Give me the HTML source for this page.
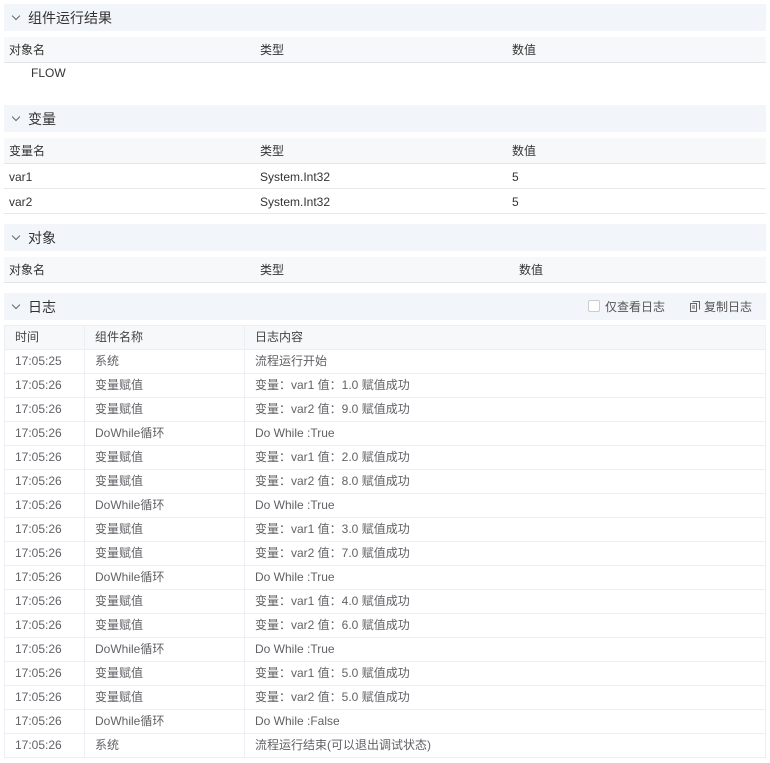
<!DOCTYPE html><html><head><style>
*{margin:0;padding:0;box-sizing:border-box}
body{width:770px;height:763px;background:#fff;font-family:"Liberation Sans","Noto Sans CJK SC",sans-serif;font-size:12px;color:#333;position:relative;overflow:hidden}
.h{position:absolute;left:4px;width:762px;height:27px;background:#f2f5fa;font-size:14px;line-height:29px;padding-left:24px;color:#333}
.h:before{content:"";position:absolute;left:9px;top:9px;width:5px;height:5px;border-right:1px solid #666;border-bottom:1px solid #666;transform:rotate(45deg)}
.th{position:absolute;left:4px;width:762px;height:26px;background:#f7f8fa;border-bottom:1px solid #e3e5ea;line-height:26px}
.r{position:absolute;left:4px;width:762px;height:25px;border-bottom:1px solid #e6e8ec;line-height:26px}
.c{position:absolute;top:0}
table{position:absolute;left:4px;top:325px;width:762px;border-collapse:collapse;color:#606266}
td{height:24px;border:1px solid #ebeef5;padding-left:10px;line-height:23px}
tr:first-child td{background:#f7f8fa;color:#444}
.t{position:absolute;font-size:12px;color:#555;top:293px;line-height:27px}
</style></head><body>
<div class="h" style="top:4px">组件运行结果</div>
<div class="th" style="top:37px"><span class="c" style="left:5px">对象名</span><span class="c" style="left:256px">类型</span><span class="c" style="left:508px">数值</span></div>
<div style="position:absolute;left:31px;top:64px;line-height:18px">FLOW</div>
<div class="h" style="top:105px">变量</div>
<div class="th" style="top:138px"><span class="c" style="left:5px">变量名</span><span class="c" style="left:256px">类型</span><span class="c" style="left:508px">数值</span></div>
<div class="r" style="top:164px"><span class="c" style="left:5px">var1</span><span class="c" style="left:256px">System.Int32</span><span class="c" style="left:508px">5</span></div>
<div class="r" style="top:189px"><span class="c" style="left:5px">var2</span><span class="c" style="left:256px">System.Int32</span><span class="c" style="left:508px">5</span></div>
<div class="h" style="top:224px">对象</div>
<div class="th" style="top:257px"><span class="c" style="left:5px">对象名</span><span class="c" style="left:256px">类型</span><span class="c" style="left:515px">数值</span></div>
<div class="h" style="top:293px">日志</div>
<div style="position:absolute;left:588px;top:300px;width:12px;height:12px;border:1px solid #ccc;border-radius:2px;background:#fff"></div>
<div class="t" style="left:605px;top:294px">仅查看日志</div>
<svg style="position:absolute;left:689px;top:300px" width="12" height="13" viewBox="0 0 12 13"><path d="M3.5 1.5h7v8M1.5 3.5h6v8h-6z M3 6h3M3 8h3" fill="none" stroke="#666" stroke-width="1"/></svg>
<div class="t" style="left:704px;top:294px">复制日志</div>
<table>
<colgroup><col style="width:80px"><col style="width:160px"><col></colgroup>
<tr><td>时间</td><td>组件名称</td><td>日志内容</td></tr>
<tr><td>17:05:25</td><td>系统</td><td>流程运行开始</td></tr>
<tr><td>17:05:26</td><td>变量赋值</td><td>变量：var1 值：1.0 赋值成功</td></tr>
<tr><td>17:05:26</td><td>变量赋值</td><td>变量：var2 值：9.0 赋值成功</td></tr>
<tr><td>17:05:26</td><td>DoWhile循环</td><td>Do While :True</td></tr>
<tr><td>17:05:26</td><td>变量赋值</td><td>变量：var1 值：2.0 赋值成功</td></tr>
<tr><td>17:05:26</td><td>变量赋值</td><td>变量：var2 值：8.0 赋值成功</td></tr>
<tr><td>17:05:26</td><td>DoWhile循环</td><td>Do While :True</td></tr>
<tr><td>17:05:26</td><td>变量赋值</td><td>变量：var1 值：3.0 赋值成功</td></tr>
<tr><td>17:05:26</td><td>变量赋值</td><td>变量：var2 值：7.0 赋值成功</td></tr>
<tr><td>17:05:26</td><td>DoWhile循环</td><td>Do While :True</td></tr>
<tr><td>17:05:26</td><td>变量赋值</td><td>变量：var1 值：4.0 赋值成功</td></tr>
<tr><td>17:05:26</td><td>变量赋值</td><td>变量：var2 值：6.0 赋值成功</td></tr>
<tr><td>17:05:26</td><td>DoWhile循环</td><td>Do While :True</td></tr>
<tr><td>17:05:26</td><td>变量赋值</td><td>变量：var1 值：5.0 赋值成功</td></tr>
<tr><td>17:05:26</td><td>变量赋值</td><td>变量：var2 值：5.0 赋值成功</td></tr>
<tr><td>17:05:26</td><td>DoWhile循环</td><td>Do While :False</td></tr>
<tr><td>17:05:26</td><td>系统</td><td>流程运行结束(可以退出调试状态)</td></tr>
</table>
</body></html>
